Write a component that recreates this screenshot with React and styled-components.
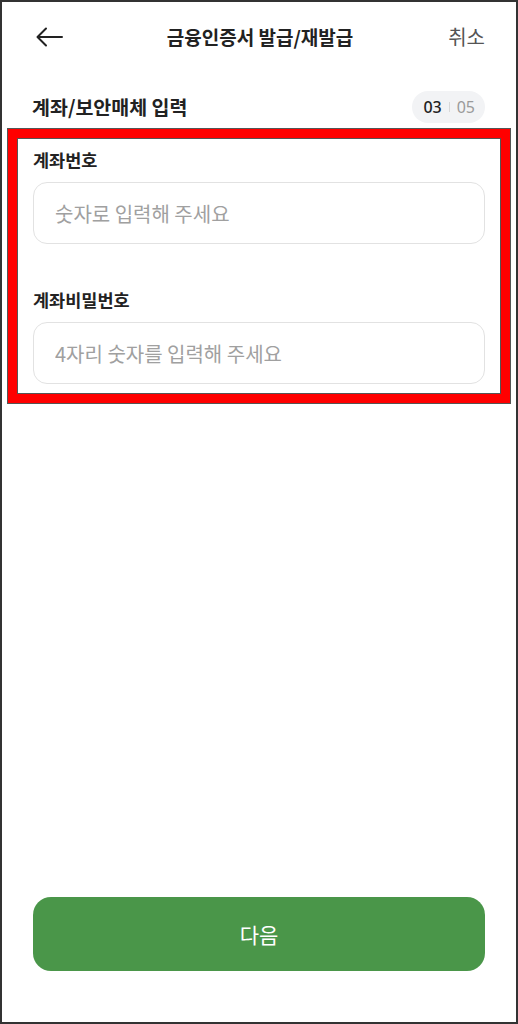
import React from "react";
import styled, { createGlobalStyle } from "styled-components";

const Global = createGlobalStyle`
  html, body { margin: 0; padding: 0; background: #fff; }
  * { box-sizing: border-box; }
  body { font-family: "Noto Sans CJK KR", "Noto Sans", sans-serif; }
`;

const Screen = styled.div`
  width: 518px;
  height: 1024px;
  border: 2px solid #333;
  background: #fff;
  display: flex;
  flex-direction: column;
  color: #222;
`;

const Header = styled.header`
  height: 70px;
  padding: 0 31px 0 33px;
  display: grid;
  grid-template-columns: 1fr auto 1fr;
  align-items: center;
`;

const BackButton = styled.button`
  justify-self: start;
  width: 30px;
  height: 24px;
  padding: 0;
  border: 0;
  background: none;
  display: flex;
  align-items: center;
`;

const Title = styled.h1`
  margin: 0;
  font-size: 19px;
  font-weight: 700;
  line-height: 24px;
  color: #222;
`;

const Cancel = styled.button`
  justify-self: end;
  border: 0;
  background: none;
  padding: 0;
  font-family: inherit;
  font-size: 20px;
  line-height: 24px;
  color: #555;
`;

const SectionRow = styled.div`
  padding: 19px 31px 0 30px;
  height: 51px;
  display: flex;
  align-items: center;
  justify-content: space-between;
`;

const SectionTitle = styled.h2`
  margin: 0;
  font-size: 19.5px;
  font-weight: 700;
  line-height: 24px;
  color: #222;
`;

const StepPill = styled.div`
  height: 32px;
  padding: 0 10px 0 11px;
  border-radius: 16px;
  background: #f2f3f5;
  display: flex;
  align-items: center;
  gap: 7px;
  font-family: "Noto Sans", sans-serif;
  font-size: 16px;
`;

const StepNum = styled.span`
  color: ${(p) => (p.$current ? "#222" : "#9a9a9a")};
  font-weight: ${(p) => (p.$current ? 500 : 400)};
  line-height: 20px;
`;

const StepDivider = styled.span`
  width: 1px;
  height: 10px;
  background: #d8d8d8;
`;

const Form = styled.section`
  position: relative;
  padding: 25px 31px 0 31px;
  display: flex;
  flex-direction: column;
`;

const Field = styled.div`
  display: flex;
  flex-direction: column;
  gap: 10px;
  & + & {
    margin-top: 44px;
  }
`;

const Label = styled.label`
  font-size: 17.5px;
  font-weight: 700;
  line-height: 24px;
  color: #222;
`;

const Input = styled.input`
  height: 62px;
  width: 100%;
  border: 1px solid #e2e2e2;
  border-radius: 14px;
  padding: 0 21px;
  font-family: inherit;
  font-size: 20px;
  color: #222;
  outline: none;
  background: #fff;
  &::placeholder {
    color: #a0a0a0;
  }
`;

const Highlight = styled.div`
  position: absolute;
  top: 6px;
  left: 6px;
  width: 502px;
  height: 274px;
  border: 9px solid #ff0000;
  box-shadow: 0 0 0 1px #555, inset 0 0 0 1px #555;
  pointer-events: none;
`;

const Spacer = styled.div`
  flex: 1;
`;

const Footer = styled.div`
  padding: 0 31px 51px 31px;
`;

const NextButton = styled.button`
  width: 100%;
  height: 74px;
  border: 0;
  border-radius: 18px;
  background: #4a9649;
  color: #fff;
  font-family: inherit;
  font-size: 21px;
  font-weight: 400;
`;

export default function App() {
  return (
    <>
      <Global />
      <Screen>
        <Header>
          <BackButton aria-label="뒤로">
            <svg width="28" height="22" viewBox="0 0 28 22" fill="none">
              <path
                d="M27 11H3M11 2.5L2.5 11L11 19.5"
                stroke="#222"
                strokeWidth="2"
                strokeLinecap="round"
                strokeLinejoin="round"
              />
            </svg>
          </BackButton>
          <Title>금융인증서 발급/재발급</Title>
          <Cancel>취소</Cancel>
        </Header>
        <SectionRow>
          <SectionTitle>계좌/보안매체 입력</SectionTitle>
          <StepPill>
            <StepNum $current>03</StepNum>
            <StepDivider />
            <StepNum>05</StepNum>
          </StepPill>
        </SectionRow>
        <Form>
          <Field>
            <Label>계좌번호</Label>
            <Input placeholder="숫자로 입력해 주세요" />
          </Field>
          <Field>
            <Label>계좌비밀번호</Label>
            <Input placeholder="4자리 숫자를 입력해 주세요" />
          </Field>
          <Highlight />
        </Form>
        <Spacer />
        <Footer>
          <NextButton>다음</NextButton>
        </Footer>
      </Screen>
    </>
  );
}
